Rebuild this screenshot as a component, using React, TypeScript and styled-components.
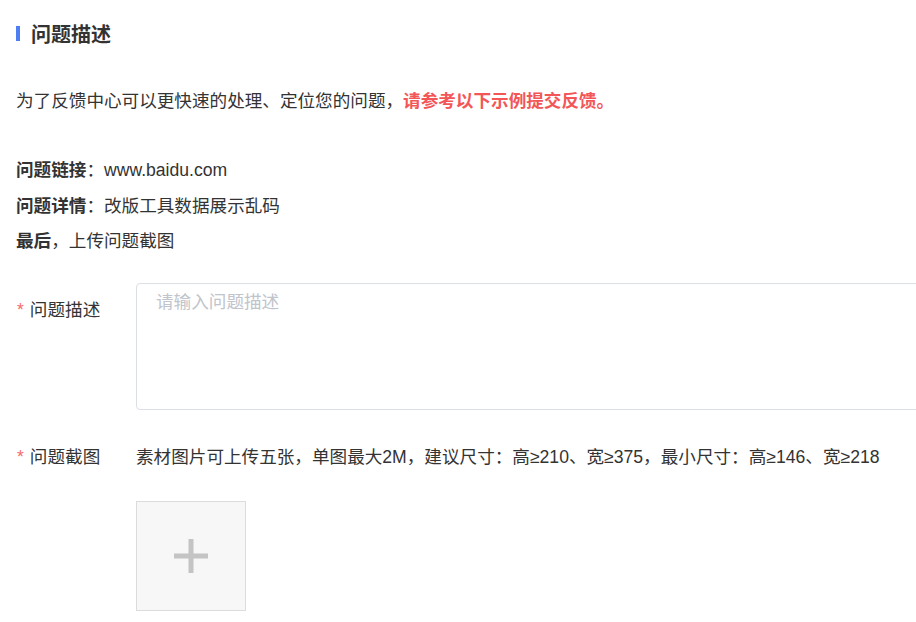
import React from 'react';
import styled, { createGlobalStyle } from 'styled-components';

const GlobalStyle = createGlobalStyle`
  html, body {
    margin: 0;
    padding: 0;
    background: #fff;
    overflow: hidden;
  }
  body {
    font-family: "Liberation Sans", "Noto Sans CJK SC", sans-serif;
    color: #333;
  }
`;

const Page = styled.div`
  padding: 19px 0 0 16px;
  width: 900px;
`;

const SectionTitle = styled.h2`
  display: flex;
  align-items: center;
  gap: 11px;
  margin: 0;
  height: 28px;
  font-size: 20px;
  font-weight: 700;
  color: #333;

  &::before {
    content: '';
    display: block;
    flex: 0 0 4px;
    width: 4px;
    height: 15px;
    background: #4d7ef2;
  }
`;

const Intro = styled.p`
  margin: 37px 0 0;
  font-size: 17.6px;
  line-height: 35px;
`;

const Highlight = styled.strong`
  color: #f25656;
  font-weight: 700;
`;

const Example = styled.div`
  margin-top: 34px;
  font-size: 17.6px;
  line-height: 35.5px;
`;

const Key = styled.b`
  font-weight: 700;
`;

const FormRow = styled.div<{ $top: number }>`
  display: flex;
  align-items: flex-start;
  margin-top: ${({ $top }) => $top}px;
`;

const Label = styled.label<{ $pad: number }>`
  flex: 0 0 120px;
  padding-top: ${({ $pad }) => $pad}px;
  font-size: 17.6px;
  line-height: 24px;
  color: #333;

  &::before {
    content: '*';
    color: #f56c6c;
    margin: 0 6px 0 1px;
  }
`;

const TextArea = styled.textarea`
  box-sizing: border-box;
  flex: 0 0 820px;
  height: 127px;
  padding: 5px 19px;
  border: 1px solid #dcdfe6;
  border-radius: 4px;
  resize: none;
  outline: none;
  font-family: inherit;
  font-size: 17.6px;
  line-height: 26px;
  color: #333;

  &::placeholder {
    color: #c0c4cc;
  }
`;

const Field = styled.div`
  display: flex;
  flex-direction: column;
  gap: 32px;
`;

const Hint = styled.div`
  font-size: 17.6px;
  line-height: 24px;
  color: #333;
`;

const UploadBox = styled.button`
  box-sizing: border-box;
  width: 110px;
  height: 110px;
  padding: 0;
  border: 1px solid #dcdcdc;
  background: #f7f7f7;
  cursor: pointer;
  display: flex;
  align-items: center;
  justify-content: center;
`;

export default function App() {
  return (
    <>
      <GlobalStyle />
      <Page>
        <SectionTitle>问题描述</SectionTitle>
        <Intro>
          为了反馈中心可以更快速的处理、定位您的问题，
          <Highlight>请参考以下示例提交反馈。</Highlight>
        </Intro>
        <Example>
          <div>
            <Key>问题链接</Key>：www.baidu.com
          </div>
          <div>
            <Key>问题详情</Key>：改版工具数据展示乱码
          </div>
          <div>
            <Key>最后</Key>，上传问题截图
          </div>
        </Example>
        <FormRow $top={23}>
          <Label $pad={15}>问题描述</Label>
          <TextArea placeholder="请输入问题描述" />
        </FormRow>
        <FormRow $top={35}>
          <Label $pad={0}>问题截图</Label>
          <Field>
            <Hint>素材图片可上传五张，单图最大2M，建议尺寸：高≥210、宽≥375，最小尺寸：高≥146、宽≥218</Hint>
            <UploadBox aria-label="上传图片">
              <svg width="34" height="34" viewBox="0 0 34 34">
                <rect x="0" y="14.5" width="34" height="5" fill="#c4c4c4" />
                <rect x="14.5" y="0" width="5" height="34" fill="#c4c4c4" />
              </svg>
            </UploadBox>
          </Field>
        </FormRow>
      </Page>
    </>
  );
}
